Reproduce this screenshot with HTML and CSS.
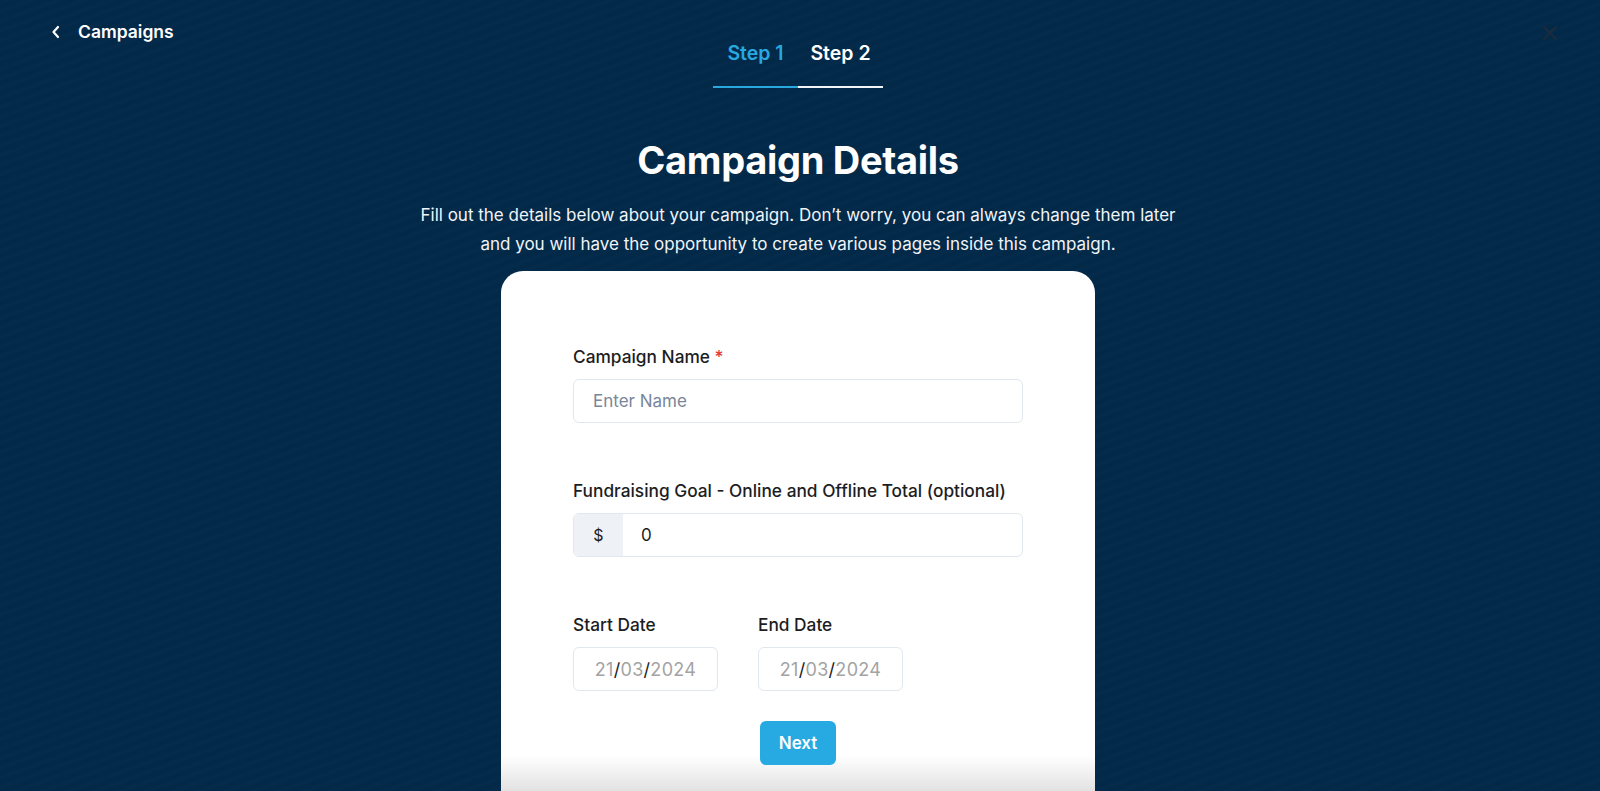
FILE: index.html
```html
<!DOCTYPE html>
<html lang="en">
<head>
<meta charset="utf-8">
<title>Campaign Details</title>
<link rel="stylesheet" href="styles.css">
</head>
<body>
<div class="page">
  <header class="topbar">
    <a class="back" href="#">
      <svg class="chev" width="10" height="14" viewBox="0 0 10 14"><path d="M7 2 L2.5 7 L7 12" fill="none" stroke="#fff" stroke-width="2.2" stroke-linecap="round" stroke-linejoin="round"/></svg>
      <span>Campaigns</span>
    </a>
    <nav class="tabs">
      <div class="tab active">Step 1</div>
      <div class="tab">Step 2</div>
    </nav>
    <div class="close">
      <svg width="18" height="18" viewBox="0 0 18 18"><path d="M3 3 L15 15 M15 3 L3 15" stroke="#1c2b3d" stroke-width="2" stroke-linecap="round"/></svg>
    </div>
  </header>

  <main class="main">
    <h1 class="title">Campaign Details</h1>
    <p class="intro">Fill out the details below about your campaign. Don’t worry, you can always change them later<br>and you will have the opportunity to create various pages inside this campaign.</p>

    <section class="card">
      <div class="field">
        <label class="label">Campaign Name <span class="req">*</span></label>
        <div class="input"><span class="placeholder">Enter Name</span></div>
      </div>

      <div class="field">
        <label class="label">Fundraising Goal - Online and Offline Total (optional)</label>
        <div class="input group">
          <span class="addon">$</span>
          <span class="value">0</span>
        </div>
      </div>

      <div class="dates">
        <div class="date-field">
          <label class="label">Start Date</label>
          <div class="date"><span class="d">21</span><span class="s">/</span><span class="d">03</span><span class="s">/</span><span class="d">2024</span></div>
        </div>
        <div class="date-field">
          <label class="label">End Date</label>
          <div class="date"><span class="d">21</span><span class="s">/</span><span class="d">03</span><span class="s">/</span><span class="d">2024</span></div>
        </div>
      </div>

      <div class="actions">
        <button class="next" type="button">Next</button>
      </div>
    </section>
  </main>
</div>
</body>
</html>
```

FILE: styles.css
```css
* { box-sizing: border-box; }

html, body {
  margin: 0;
  height: 100%;
  overflow: hidden;
}

body {
  font-family: Inter, "Noto Sans", "Liberation Sans", sans-serif;
  background-color: #03294a;
  background-image:
    repeating-linear-gradient(160deg, rgba(255,255,255,0.007) 0px, rgba(255,255,255,0.007) 4px, rgba(0,0,0,0.012) 4px, rgba(0,0,0,0.012) 9px);
  color: #fff;
}

.page {
  padding-right: 4px;
  display: flex;
  flex-direction: column;
  height: 791px;
}

.topbar {
  display: grid;
  grid-template-columns: 1fr auto 1fr;
  height: 88px;
}

.back {
  display: flex;
  align-items: center;
  gap: 17px;
  align-self: start;
  margin-top: 21px;
  margin-left: 51px;
  color: #fff;
  text-decoration: none;
  font-size: 17.5px;
  font-weight: 600;
  line-height: 22px;
}

.chev { display: block; }

.tabs {
  display: flex;
  align-self: end;
}

.tab {
  width: 85px;
  text-align: center;
  font-size: 19.5px;
  font-weight: 600;
  line-height: 24px;
  padding-bottom: 21px;
  border-bottom: 2px solid #f2f4f6;
  color: #fff;
}

.tab.active {
  color: #29a8e0;
  border-bottom-color: #29a8e0;
}

.close {
  justify-self: end;
  align-self: start;
  margin-top: 24px;
  margin-right: 37px;
}

.close svg { display: block; }

.main {
  flex: 1;
  display: flex;
  flex-direction: column;
  align-items: center;
  min-height: 0;
}

.title {
  margin: 50px 0 0;
  font-size: 38px;
  line-height: 44px;
  font-weight: 700;
  letter-spacing: -0.3px;
}

.intro {
  margin: 19px 0 0;
  text-align: center;
  font-size: 17px;
  line-height: 29px;
  color: #f1f4f7;
}

.card {
  margin-top: 12px;
  width: 594px;
  flex: 1;
  background: linear-gradient(to bottom, #ffffff 0, #ffffff calc(100% - 36px), #e2e2e2 100%);
  border-radius: 22px 22px 0 0;
  padding: 74px 72px 0;
  color: #1b1b1b;
  display: flex;
  flex-direction: column;
}

.field { margin-bottom: 56px; }

.label {
  display: block;
  font-size: 17.3px;
  line-height: 24px;
  font-weight: 500;
  color: #1d1d1f;
  margin-bottom: 10px;
}

.req { color: #e53935; }

.input {
  height: 44px;
  border: 1px solid #e1e7ef;
  border-radius: 6px;
  background: #fff;
  display: flex;
  align-items: center;
  padding-left: 19px;
  font-size: 17px;
}

.placeholder { color: #7a8699; }

.input.group {
  padding-left: 0;
  overflow: hidden;
}

.addon {
  width: 49px;
  height: 100%;
  display: flex;
  align-items: center;
  justify-content: center;
  background: #eef2f7;
  color: #1d1d1f;
  font-size: 16px;
}

.value {
  padding-left: 18px;
  color: #1d1d1f;
}

.dates {
  display: flex;
  gap: 40px;
}

.date-field .label { margin-bottom: 10px; }

.date {
  width: 145px;
  height: 44px;
  border: 1px solid #e1e7ef;
  border-radius: 6px;
  display: flex;
  align-items: center;
  justify-content: center;
  font-size: 18px;
  letter-spacing: 0.3px;
}

.date .d { color: #a3a3a3; }
.date .s { color: #1d1d1f; }

.actions {
  display: flex;
  justify-content: center;
  margin-top: 30px;
}

.next {
  width: 76px;
  height: 44px;
  border: none;
  border-radius: 6px;
  background: #27a9e1;
  color: #fff;
  font-family: inherit;
  font-size: 17px;
  font-weight: 600;
}
```
